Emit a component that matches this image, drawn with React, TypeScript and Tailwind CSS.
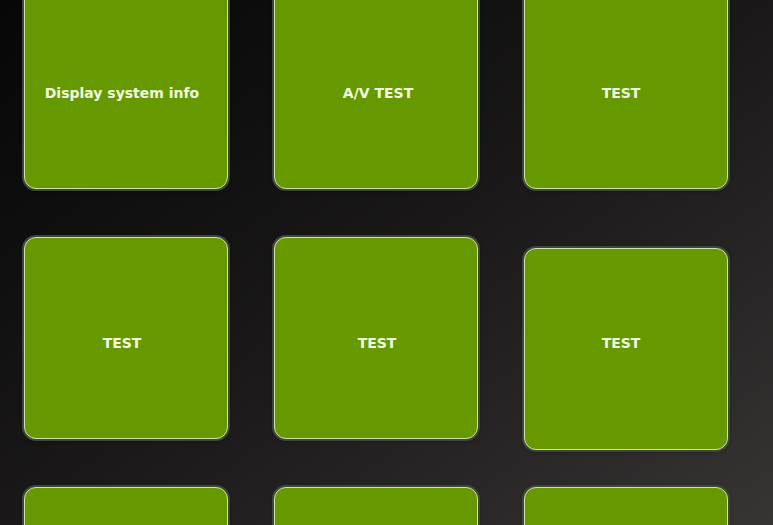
const tiles = [
  { label: "Display system info", dx: "-translate-x-[4px]" },
  { label: "A/V TEST", dx: "translate-x-[2px]" },
  { label: "TEST", dx: "-translate-x-[5px]" },
  { label: "TEST", dx: "-translate-x-[4px]" },
  { label: "TEST", dx: "translate-x-[1px]" },
  { label: "TEST", dx: "-translate-x-[5px]", pressed: true },
  { label: "" },
  { label: "" },
  { label: "" },
];

export default function App() {
  return (
    <div className="w-[773px] h-[525px] overflow-hidden bg-gradient-to-br from-[#070707] via-[#1a1819] to-[#393434]">
      {/* TILE GRID */}
      <div className="grid grid-cols-[204px_204px_204px] auto-rows-[202px] gap-x-[46px] gap-y-[48px] pl-[24px] -mt-[13px]">
        {tiles.map((t, i) => (
          <div key={i} className="relative">
            {/* tile body (pressed one sits lower) */}
            <div
              className={
                "absolute inset-0 rounded-[12px] bg-[#669900] border border-[#cde2ad] shadow-[0_0_0_2px_#3f463a,0_1px_4px_rgba(0,0,0,0.7)] " +
                (t.pressed ? "translate-y-[11px]" : "")
              }
            />
            {/* label stays put */}
            <div
              className={
                "relative h-full flex items-center justify-center pt-[10px] text-[14px] font-bold text-[#f2fbe0] font-['DejaVu_Sans',sans-serif] " +
                (t.dx ?? "")
              }
            >
              {t.label}
            </div>
          </div>
        ))}
      </div>
    </div>
  );
}
